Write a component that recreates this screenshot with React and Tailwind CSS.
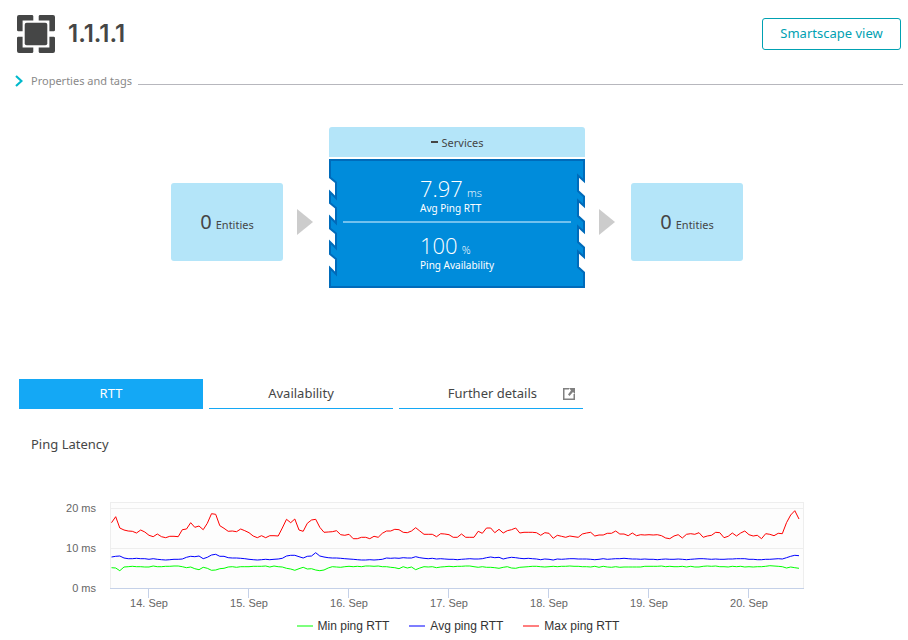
const RED = [98,80,114,120,123,124,129,120,126,136,140,132,140,143,139,139,140,119,117,98,112,108,119,100,71,73,107,115,124,123,125,117,122,128,138,143,137,143,137,137,138,114,88,98,87,120,124,100,90,88,112,127,126,125,122,134,136,133,146,146,142,142,146,139,142,130,123,123,118,119,127,128,123,113,123,133,133,133,140,131,132,134,142,142,132,142,142,142,124,130,114,114,128,118,129,122,119,114,129,127,127,127,128,136,128,130,145,136,139,142,138,140,142,132,129,127,138,135,135,130,130,123,132,132,137,129,137,134,135,134,135,134,137,144,146,138,134,144,133,131,133,128,142,138,136,127,128,143,139,129,138,129,123,134,138,136,146,131,133,137,130,131,98,75,62,87];
const BLUE = [201,199,198,204,206,206,205,206,206,208,206,208,209,210,209,208,208,207,202,199,200,198,206,202,195,193,199,199,203,204,204,205,206,208,209,210,209,208,209,208,207,205,198,196,196,200,204,199,198,188,198,201,203,204,204,205,206,207,208,209,210,210,209,210,209,208,204,205,204,205,203,204,204,200,203,205,206,205,207,206,207,208,208,209,208,207,206,207,207,206,203,201,203,202,207,204,202,203,205,206,205,206,207,209,207,208,210,207,208,207,206,206,207,207,207,208,209,208,206,208,207,206,206,205,206,207,207,208,207,208,208,209,208,207,208,208,207,208,209,208,207,206,206,207,208,207,208,208,207,207,206,206,206,208,208,209,209,208,208,207,206,207,203,199,196,197];
const GREEN = [233,234,242,231,230,229,230,230,231,231,228,230,230,229,229,228,228,230,233,231,236,239,232,235,241,240,236,235,231,230,232,230,230,230,229,229,229,228,231,228,230,231,235,237,241,236,232,237,236,240,242,240,234,230,231,232,230,229,230,229,230,228,228,229,228,230,230,232,233,236,230,234,231,239,234,230,231,230,233,231,230,229,230,229,229,228,228,230,232,230,232,232,233,235,232,230,234,235,232,231,230,229,229,230,231,230,229,230,229,229,228,229,229,230,230,231,229,232,229,231,232,230,232,231,231,231,231,231,229,229,229,229,228,230,229,230,230,229,231,229,231,231,229,228,229,228,230,230,231,229,230,229,231,230,231,230,230,229,227,228,229,230,234,231,233,235];

const SERIES = [
  { name: 'Min ping RTT', color: '#00ff00', values: GREEN },
  { name: 'Avg ping RTT', color: '#0000ff', values: BLUE },
  { name: 'Max ping RTT', color: '#ff0000', values: RED },
];

const DAYS = ['14. Sep', '15. Sep', '16. Sep', '17. Sep', '18. Sep', '19. Sep', '20. Sep'];

// One sample per hour, 100 units per day; values are thirds of a unit from the chart top.
function toPoints(values) {
  return values.map((v, i) => `${(61.5 + (i * 100) / 24).toFixed(1)},${(v / 3).toFixed(1)}`).join(' ');
}

function LatencyChart() {
  return (
    <svg viewBox="0 0 760 124" role="img" aria-label="Ping Latency" className="block w-full">
      <rect x="60.5" y="12.5" width="693" height="86" fill="#fdfdfd" stroke="#eeeeee" />
      <path d="M61 18.5H753M61 58.5H753" stroke="#eeeeee" />
      <path d="M60 98.5H754" stroke="#c5d1e8" />
      {DAYS.map((day, i) => (
        <path key={day} d={`M${98.5 + i * 100} 98V108`} stroke="#c5d1e8" />
      ))}
      {SERIES.map((s) => (
        <polyline key={s.name} points={toPoints(s.values)} fill="none" stroke={s.color} strokeLinejoin="round" />
      ))}
      <g fill="#666666" fontSize="11">
        {['20 ms', '10 ms', '0 ms'].map((label, i) => (
          <text key={label} x="46" y={22 + i * 40} textAnchor="end">{label}</text>
        ))}
        {DAYS.map((day, i) => (
          <text key={day} x={99 + i * 100} y="117" textAnchor="middle">{day}</text>
        ))}
      </g>
    </svg>
  );
}

function Entities() {
  return (
    <div className="flex h-[78px] w-28 items-center justify-center rounded-[3px] bg-[#b4e5f9]">
      <p className="flex items-baseline gap-1 text-[#454646]">
        <span className="text-xl">0</span>
        <span className="text-[11px]">Entities</span>
      </p>
    </div>
  );
}

function Arrow() {
  return (
    <svg width="16" height="26" viewBox="0 0 16 26" aria-hidden="true" className="shrink-0">
      <path d="M0 0L16 13L0 26Z" fill="#cccccc" />
    </svg>
  );
}

function Metric({ value, unit, label }) {
  return (
    <div className="h-[57px] pl-[91px] text-white">
      <p className="h-7 font-['Open_Sans','Noto_Sans',sans-serif] text-[22px] leading-7 font-light">
        {value}
        <span className="ml-1 text-[11px]">{unit}</span>
      </p>
      <p className="text-[10px] leading-3">{label}</p>
    </div>
  );
}

function HostTile() {
  return (
    <div className="w-64">
      <div className="flex h-[30px] items-center justify-center gap-1 rounded-t-[3px] bg-[#b4e5f9] text-[#454646]">
        <span className="h-[2px] w-[7px] bg-[#454646]" />
        <span className="pt-[3px] text-[11px]">Services</span>
      </div>
      <div className="relative mt-[2px] h-[129px]">
        <svg viewBox="0 0 256 129" aria-hidden="true" className="absolute inset-0 h-full w-full">
          <path
            d="M1 1H255V22L249 16.500V32L255 37.500V47L249 41.500V57L255 62.500V73L249 67.500V83L255 88.500V98L249 92.500V108L255 113.500V128H1V109L7 115V100L1 95V83L7 89V74.500L1 69.500V58L7 64V49L1 44V33L7 39V23.500L1 18.500Z"
            fill="#008cdb"
            stroke="#006bba"
            strokeWidth="2"
          />
        </svg>
        <div className="relative pt-[15px]">
          <Metric value="7.97" unit="ms" label="Avg Ping RTT" />
          <Metric value="100" unit="%" label="Ping Availability" />
        </div>
        <div className="absolute inset-x-[14px] top-[62px] h-[2px] bg-[#72c1ee]" />
      </div>
    </div>
  );
}

export default function App() {
  return (
    <main className="min-h-screen bg-white font-['Noto_Sans',sans-serif] text-[#454646]">
      <header className="flex items-center pt-[15px] pr-[7px] pl-[17px]">
        <svg width="38" height="38" viewBox="0 0 38 38" aria-hidden="true">
          <g fill="#454646">
            <rect x="7.700" y="7.700" width="22.600" height="22.600" rx="2" />
            <path d="M2 0H15.500L16.300 1V5.600H5.600V16.300H1L0 15.500V2Q0 0 2 0ZM21.700 1L22.500 0H36Q38 0 38 2V15.500L37 16.300H32.400V5.600H21.700ZM0 22.500L1 21.700H5.600V32.400H16.300V37L15.500 38H2Q0 38 0 36ZM32.400 21.700H37L38 22.500V36Q38 38 36 38H22.500L21.700 37V32.400H32.400Z" />
          </g>
        </svg>
        <h1 className="ml-[13px] flex-1 font-['Inter','Noto_Sans',sans-serif] text-2xl font-semibold">1.1.1.1</h1>
        <button type="button" className="h-8 w-[139px] rounded-[3px] border border-[#00a1b2] text-[13px] text-[#00a1b2]">
          Smartscape view
        </button>
      </header>

      <div className="mt-5 flex h-4 items-center pr-[5px] pl-[15px]">
        <button type="button" className="flex items-center text-[11px] leading-4 text-[#898989]">
          <svg width="8" height="12" viewBox="0 0 8 12" aria-hidden="true" className="mr-2">
            <path d="M1 1L6.500 6L1 11" fill="none" stroke="#00b9cc" strokeWidth="2.200" />
          </svg>
          Properties and tags
        </button>
        <span className="mt-[7px] ml-[6px] h-px flex-1 bg-[#b7b7bd]" />
      </div>

      <section className="mt-[38px] flex items-start justify-center pl-[6px]">
        <div className="mt-14 flex items-center gap-[14px]">
          <Entities />
          <Arrow />
        </div>
        <div className="mr-[14px] ml-4">
          <HostTile />
        </div>
        <div className="mt-14 flex items-center gap-4">
          <Arrow />
          <Entities />
        </div>
      </section>

      <nav className="mt-[91px] flex gap-[6px] pl-[19px] text-[13px]">
        <button type="button" className="h-[30px] w-[184px] bg-[#14a8f5] text-white">RTT</button>
        <button type="button" className="h-[30px] w-[184px] border-b border-[#14a8f5]">Availability</button>
        <a href="#details" className="flex h-[30px] w-[184px] items-center justify-end border-b border-[#14a8f5] pr-2">
          Further details
          <svg width="12" height="12" viewBox="0 0 12 12" aria-hidden="true" className="ml-[26px]">
            <path d="M6 .75H.75V11.250H11.250V6" fill="none" stroke="#808080" strokeWidth="1.500" />
            <path d="M6 0H12V6L10 4L6.500 8L5 6.500L8 2.500Z" fill="#808080" />
          </svg>
        </a>
      </nav>

      <section>
        <h2 className="mt-[25px] pl-[31px] text-[13px] leading-5">Ping Latency</h2>
        <div className="mt-9 pr-[98px] pl-[50px] font-['Liberation_Sans',sans-serif]">
          <LatencyChart />
        </div>
        <ul className="mt-1 flex justify-center gap-5 pl-2 font-['Liberation_Sans',sans-serif] text-xs leading-4 text-[#333333]">
          {SERIES.map((s) => (
            <li key={s.name} className="flex items-center gap-[5px]">
              <svg width="16" height="2" viewBox="0 0 16 2" aria-hidden="true">
                <path d="M0 1H16" stroke={s.color} strokeWidth="2" opacity="0.5" />
              </svg>
              {s.name}
            </li>
          ))}
        </ul>
      </section>
    </main>
  );
}
